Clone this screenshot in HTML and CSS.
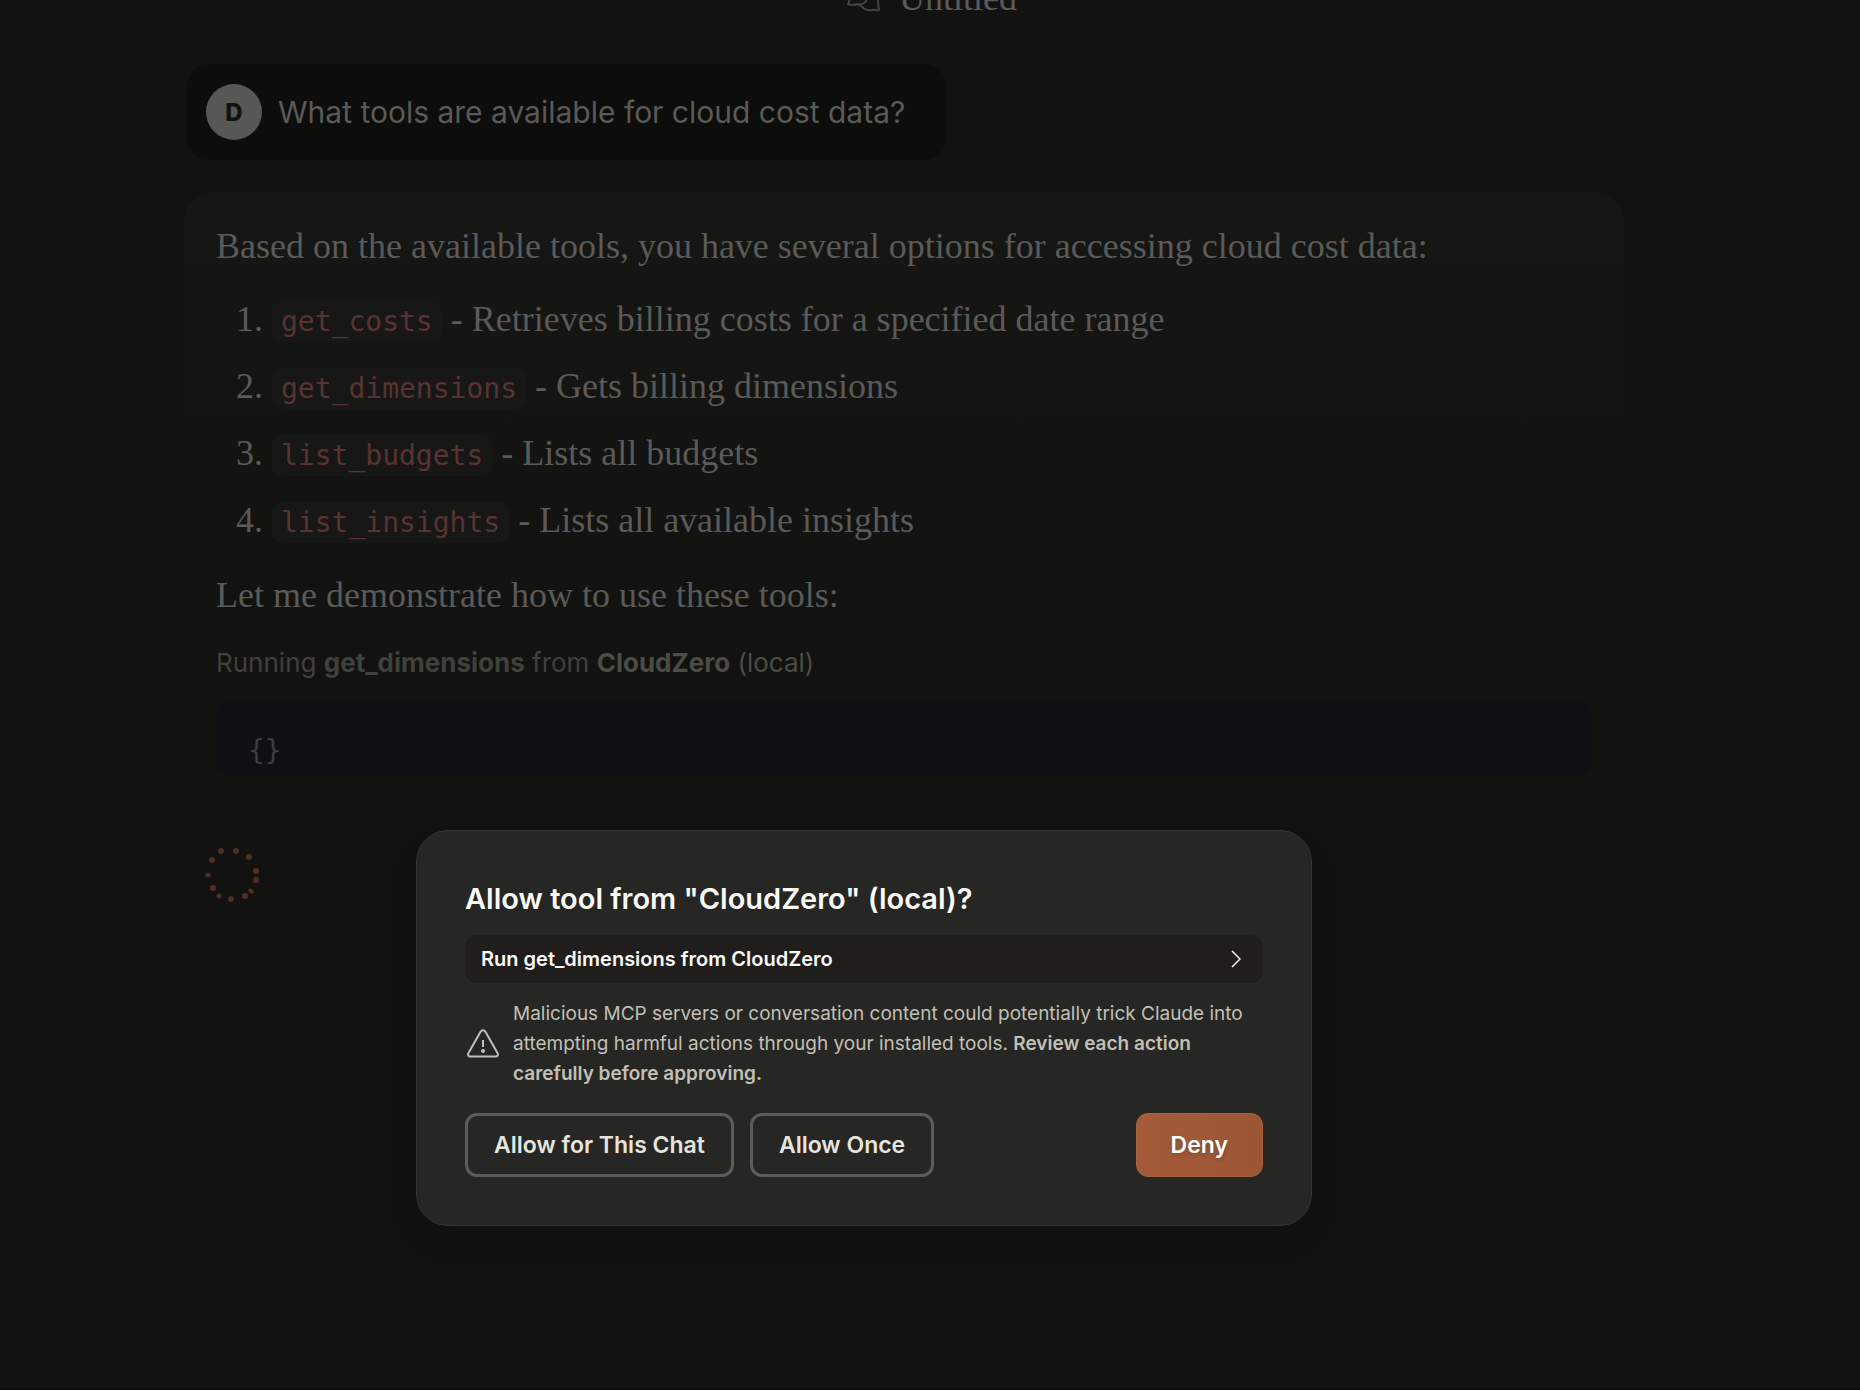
FILE: index.html
```html
<!DOCTYPE html>
<html lang="en">
<head>
<meta charset="utf-8">
<title>Untitled</title>
<link rel="stylesheet" href="styles.css">
</head>
<body>
<div class="app">
  <header class="topbar">
    <svg class="topbar-icon" viewBox="0 0 34 30" aria-hidden="true"><path d="M1 21c3-4 1-9 3-13 3-5 11-6 15-1 3 4 2 10-2 13-3 2-5 2-7 1-2 1-6 1-9 0z"/><path d="M23 7c5 1 9 5 8 10 0 3 0 5 1 10-2 1-5-1-7 0-6 1-10-2-13-6"/></svg>
    <h1 class="topbar-title">Untitled</h1>
  </header>
  <main class="thread">
    <section class="user-message">
      <span class="avatar">D</span>
      <p class="user-text">What tools are available for cloud cost data?</p>
    </section>
    <section class="reply">
      <p class="prose">Based on the available tools, you have several options for accessing cloud cost data:</p>
      <ol class="tools">
        <li><code>get_costs</code> - Retrieves billing costs for a specified date range</li>
        <li><code>get_dimensions</code> - Gets billing dimensions</li>
        <li><code>list_budgets</code> - Lists all budgets</li>
        <li><code>list_insights</code> - Lists all available insights</li>
      </ol>
      <p class="prose">Let me demonstrate how to use these tools:</p>
      <p class="running">Running <strong>get_dimensions</strong> from <strong class="server">CloudZero</strong> <span class="origin">(local)</span></p>
      <pre class="payload">{}</pre>
    </section>
    <svg class="spinner" viewBox="0 0 56 56" aria-hidden="true">
      <circle cx="17" cy="5" r="3"/><circle cx="32" cy="5" r="3"/><circle cx="45" cy="11" r="3"/><circle cx="52" cy="25" r="3"/><circle cx="52" cy="34" r="3"/><ellipse cx="47" cy="45" rx="3" ry="2" transform="rotate(42 47 45)"/><circle cx="41" cy="50" r="3"/><circle cx="27" cy="53" r="3"/><circle cx="15" cy="50" r="2.500"/><circle cx="9" cy="42" r="3"/><ellipse cx="4" cy="29" rx="3" ry="2"/><circle cx="8" cy="14" r="3"/>
    </svg>
  </main>
</div>
<div class="overlay">
  <div class="dialog" role="dialog" aria-labelledby="dialog-title">
    <h2 class="dialog-title" id="dialog-title">Allow tool from "CloudZero" (local)?</h2>
    <button class="details" type="button">
      <span>Run get_dimensions from CloudZero</span>
      <svg class="chevron" viewBox="0 0 10 18" aria-hidden="true"><path d="M1 1l8 8-8 8"/></svg>
    </button>
    <div class="warning">
      <svg class="warning-icon" viewBox="0 0 34 32" aria-hidden="true"><path class="outline" d="M15.700 3.500a2.700 2.700 0 0 1 4.600 0l12.200 21.500a2.200 2.200 0 0 1-2 3.500h-25a2.200 2.200 0 0 1-2-3.500z"/><path class="mark" d="M18 12v7"/><circle cx="18" cy="23" r="2"/></svg>
      <p>Malicious MCP servers or conversation content could potentially trick Claude into attempting harmful actions through your installed tools. <strong>Review each action carefully before approving.</strong></p>
    </div>
    <div class="actions">
      <button class="btn" type="button">Allow for This Chat</button>
      <button class="btn" type="button">Allow Once</button>
      <button class="btn btn-deny" type="button">Deny</button>
    </div>
  </div>
</div>
</body>
</html>
```
FILE: styles.css
```css
* { box-sizing: border-box; }

body {
  margin: 0;
  min-height: 100vh;
  background: #121210;
  color: #5a5a58;
  font-family: Inter, "Liberation Sans", sans-serif;
}

h1, h2, p { margin: 0; }
button { font-family: inherit; }

.app {
  min-height: 100vh;
  overflow: hidden;
  border-bottom: 2px solid #0d0d0d;
}

.topbar {
  display: flex;
  justify-content: center;
  align-items: center;
  gap: 18px;
  height: 64px;
  margin-top: -32px;
  padding: 0 0 4px 4px;
}

.topbar-icon {
  width: 34px;
  height: 30px;
  fill: none;
  stroke: #444442;
  stroke-width: 2;
}

.topbar-title { font: 400 36px/40px "Liberation Serif", serif; }

.thread {
  display: flex;
  flex-direction: column;
  align-items: flex-start;
  padding: 32px 236px 0 184px;
}

.user-message {
  display: flex;
  align-items: center;
  gap: 16px;
  min-height: 96px;
  margin-left: 2px;
  padding: 20px 42px 20px 20px;
  border-radius: 24px;
  background: #0d0d0b;
}

.avatar {
  display: flex;
  align-items: center;
  justify-content: center;
  width: 56px;
  height: 56px;
  border-radius: 50%;
  background: #575755;
  color: #121210;
  font-size: 24px;
  font-weight: 800;
}

.user-text { font-size: 30px; line-height: 40px; }

.reply {
  align-self: stretch;
  margin-top: 32px;
  padding: 32px 32px 0;
  border-radius: 32px 32px 0 0;
  background: linear-gradient(#161614, #121210 448px);
}

.prose { font: 36px/44px "Liberation Serif", serif; }

.tools {
  margin: 29px 0 31px;
  padding-left: 56px;
  font: 36px/44px "Liberation Serif", serif;
}

.tools li + li { margin-top: 23px; }

.tools code {
  padding: 3px 8px;
  border: 1px solid #181816;
  border-radius: 10px;
  background: #171716;
  color: #573430;
  font: 28px/32px "DejaVu Sans Mono", monospace;
}

.running {
  margin-top: 28px;
  color: #40403d;
  font-size: 26px;
  line-height: 36px;
}

.running .server,
.running .origin { color: #4b4b48; }

.payload {
  margin: 20px 0 0;
  padding: 32px 32px 6px;
  border-radius: 16px;
  background: #0f1014;
  color: #3c3d41;
  font: 28px/36px "DejaVu Sans Mono", monospace;
}

.spinner {
  width: 56px;
  height: 56px;
  margin: 71px 0 0 20px;
  fill: #522e22;
}

.overlay {
  position: absolute;
  inset: 0;
  display: flex;
  flex-direction: column;
  align-items: flex-start;
  padding: 830px 0 0 416px;
}

.dialog {
  width: 896px;
  padding: 48px;
  border: 1px solid #343432;
  border-radius: 32px;
  background: #262624;
  box-shadow: 0 16px 32px rgba(0, 0, 0, 0.08);
}

.dialog-title {
  color: #faf9f5;
  font-size: 29px;
  font-weight: 600;
  line-height: 40px;
}

.details {
  display: flex;
  align-items: center;
  justify-content: space-between;
  width: 100%;
  height: 48px;
  margin-top: 16px;
  padding: 0 22px 0 16px;
  border: 0;
  border-radius: 12px;
  background: #1f1e1d;
  color: #faf9f5;
  font-size: 20px;
  font-weight: 600;
}

.chevron {
  width: 10px;
  height: 18px;
  fill: none;
  stroke: currentColor;
  stroke-width: 1.500;
}

.warning {
  display: flex;
  align-items: center;
  gap: 14px;
  margin-top: 16px;
  color: #c2c0b6;
  font-size: 19px;
  line-height: 30px;
}

.warning-icon {
  flex: none;
  width: 34px;
  height: 32px;
  fill: currentColor;
}

.warning-icon .outline,
.warning-icon .mark {
  fill: none;
  stroke: currentColor;
  stroke-width: 2;
}

.warning strong { font-weight: 600; }

.actions {
  display: flex;
  gap: 16px;
  margin-top: 24px;
}

.btn {
  height: 64px;
  padding: 0 26px;
  border: 3px solid #5c5c5a;
  border-radius: 12px;
  background: transparent;
  color: #e5e4df;
  font-size: 23px;
  font-weight: 600;
}

.btn-deny {
  margin-left: auto;
  padding: 0 34px;
  border: 1px solid #a9623a;
  background: linear-gradient(90deg, #a55b39, #9c5636);
  color: #fff;
  text-shadow: 0 2px 4px rgba(0, 0, 0, 0.2);
}
```
